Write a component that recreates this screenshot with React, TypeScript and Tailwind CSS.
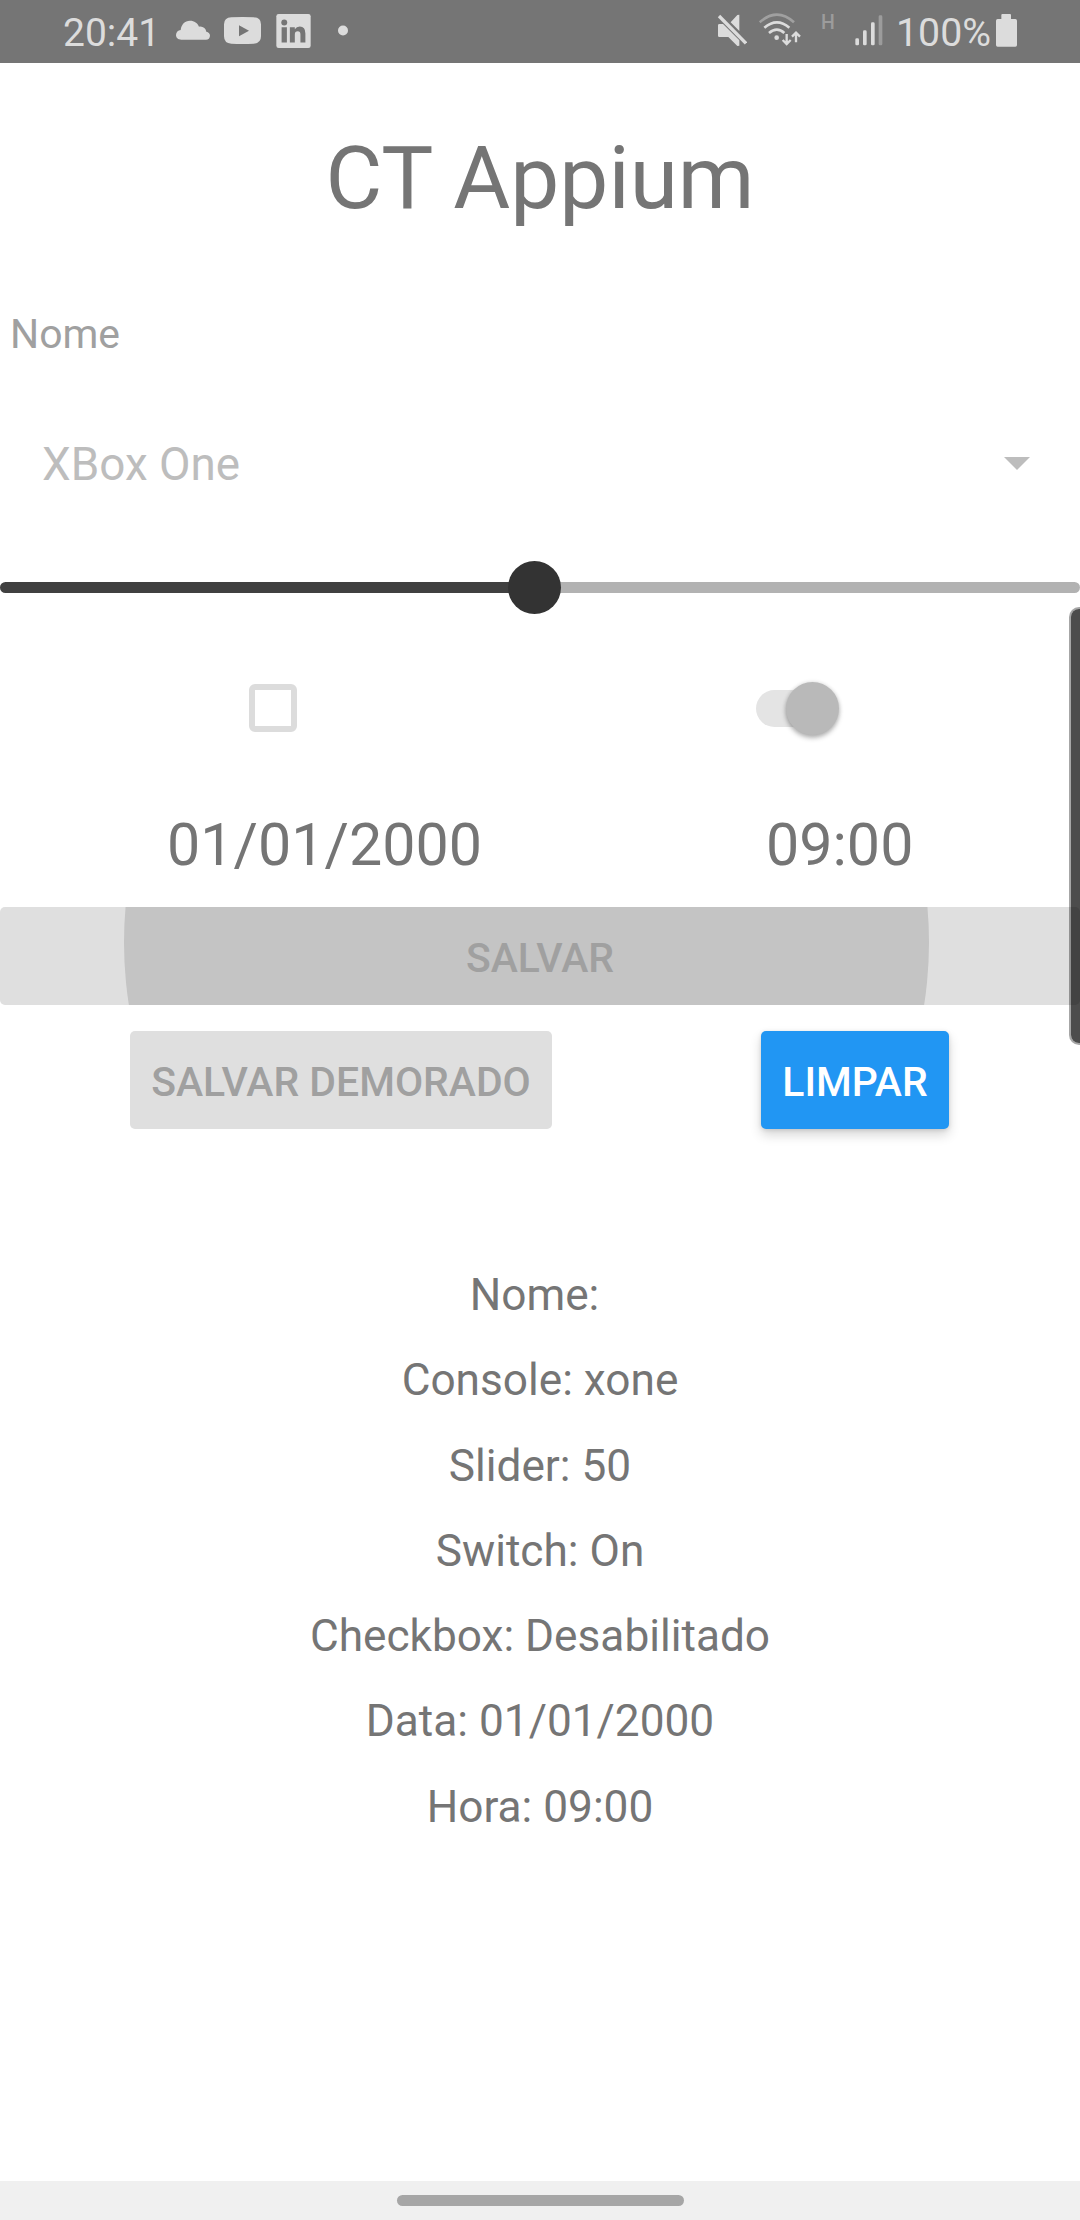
import React from "react";

function StatusBar() {
  return (
    <header className="flex h-[63px] shrink-0 items-center bg-[#757575] pl-[63px] text-[39px] leading-[63px] text-[#dcdcdc]">
      <span className="w-[113px] pt-[3px]">20:41</span>
      {/* cloud */}
      <svg className="h-5 w-[34px] shrink-0 -translate-y-[2px]" viewBox="528 58 102 60" fill="currentColor">
        <path d="M544 117C534 117 528 111 528 103C528 95 534 89 542 88C544 71 554 60 570 60C583 60 593 67 597 78C609 76 617 83 619 93C626 94 630 99 630 105C630 112 625 117 618 117Z" />
      </svg>
      {/* video */}
      <svg className="ml-[14px] h-[27px] w-[37px] shrink-0 -translate-y-[1px]" viewBox="672 51 111 81" fill="currentColor">
        <path fillRule="evenodd" d="M694 52Q728 50 761 52Q783 53 783 73V109Q783 130 761 131Q728 133 694 131Q672 130 672 109V73Q672 53 694 52ZM717 76V109L747 92.500Z" />
      </svg>
      {/* network badge */}
      <svg className="ml-[15px] h-[34px] w-[35px] shrink-0 -translate-y-[1px]" viewBox="828 41 104 103">
        <rect x="828" y="41" width="104" height="103" rx="7" fill="#dcdcdc" />
        <circle cx="852" cy="67" r="9" fill="#757575" />
        <path fill="#757575" d="M844 81H860V127H844ZM869 81H884V87Q889 79 899 79Q916 79 916 100V127H901V103Q901 93 893 93Q884 93 884 103V127H869Z" />
      </svg>
      <span className="ml-[27px] h-[10px] w-[10px] shrink-0 -translate-y-[1.5px] rounded-full bg-[#dcdcdc]" />

      {/* muted speaker */}
      <svg className="ml-[369px] h-[33px] w-[30px] shrink-0 -translate-y-[1px]" viewBox="110 42 90 99" fill="currentColor">
        <path d="M113 76Q113 72 117 72H128L177 121V137L171 138L144 111H117Q113 111 113 107ZM151 67L171 45L177 44V93Z" />
        <path d="M116 48L197 130" stroke="currentColor" strokeWidth="10" fill="none" />
      </svg>
      {/* wifi with traffic arrows */}
      <svg className="ml-[12px] h-[33px] w-[42px] shrink-0 -translate-y-[2px]" viewBox="236 38 126 99" fill="none" stroke="#dcdcdc" strokeWidth="8">
        <path d="M238 66Q290 20 341 66" stroke="#a0a0a0" />
        <path d="M252 82Q290 50 327 82" />
        <path d="M266 98Q290 78 312 98" />
        <circle cx="289" cy="112" r="7" fill="#dcdcdc" stroke="none" />
        <path d="M319 101V131M307 119L319 131L331 119M347 126V97M335 109L347 97L359 109" strokeWidth="7" />
      </svg>
      <span className="ml-[20px] w-[34px] -translate-y-[9px] text-[19.500px] font-medium text-[#9c9c9c]">H</span>
      {/* signal strength */}
      <svg className="h-[31px] w-[28px] shrink-0 -translate-y-[1px]" viewBox="524 45 84 93" fill="#dcdcdc">
        <rect x="525" y="115" width="11" height="21" rx="4" />
        <rect x="548" y="91" width="11" height="45" rx="4" />
        <rect x="572" y="67" width="11" height="69" rx="4" />
        <rect x="595" y="46" width="11" height="90" rx="4" fill="#9c9c9c" />
      </svg>
      <span className="ml-[13px] w-[100px] pt-[3px] text-[39.300px]">100%</span>
      {/* battery */}
      <svg className="h-[33px] w-[21px] shrink-0 -translate-y-[1px]" viewBox="948 42 63 99" fill="currentColor">
        <path d="M964 45Q964 42 967 42H990Q993 42 993 45V57H1006Q1011 57 1011 62V135Q1011 140 1006 140H953Q948 140 948 135V62Q948 57 953 57H964Z" />
      </svg>
    </header>
  );
}

function SelectRow() {
  return (
    <div className="flex h-[178px] shrink-0 items-center pr-[50px] pl-[42px]">
      <span className="pt-[2px] text-[45.800px] leading-[60px] text-[#bdbdbd]">XBox One</span>
      <svg className="mb-[2px] ml-auto h-[13px] w-[26px]" viewBox="0 0 26 13" fill="#bdbdbd">
        <path d="M0 0H26L13 13Z" />
      </svg>
    </div>
  );
}

function Slider() {
  return (
    <div className="flex h-[69px] shrink-0 items-center">
      <div className="h-[11px] flex-1 rounded-l-full bg-[#404040]" />
      <div className="z-10 -mx-[1px] h-[53px] w-[53px] rounded-full bg-[#333333]" />
      <div className="h-[11px] w-[520px] rounded-r-full bg-[#b2b2b2]" />
    </div>
  );
}

function Toggles() {
  return (
    <div className="flex h-[172px] shrink-0 items-center pl-[249px]">
      <div className="h-12 w-12 rounded-[6px] border-[6px] border-[#dcdcdc]" />
      <div className="ml-[459px] flex h-[37px] w-[72px] items-center rounded-full bg-[#e4e4e4]">
        <div className="-mr-[11px] ml-auto h-[53px] w-[53px] shrink-0 rounded-full bg-[#b9b9b9] shadow-[0_3px_5px_rgba(0,0,0,0.28),0_0_4px_rgba(0,0,0,0.12)]" />
      </div>
    </div>
  );
}

const summary = [
  "Nome: ",
  "Console: xone",
  "Slider: 50",
  "Switch: On",
  "Checkbox: Desabilitado",
  "Data: 01/01/2000",
  "Hora: 09:00",
];

export default function App() {
  return (
    <div className="relative flex h-[2220px] w-[1080px] flex-col overflow-hidden bg-white font-[Roboto,sans-serif] text-[#757575]">
      <StatusBar />
      <h1 className="h-[231px] shrink-0 text-center text-[87.400px] leading-[231px]">CT Appium</h1>
      <div className="flex h-[81px] shrink-0 items-center pl-[10px] text-[40.900px] leading-[81px] text-[#a0a0a0]">Nome</div>
      <SelectRow />
      <Slider />
      <Toggles />
      <div className="flex h-[113px] shrink-0 pl-[167px] text-[59.200px] leading-[102px]">
        <span className="w-[599px]">01/01/2000</span>
        <span>09:00</span>
      </div>

      <button className="relative h-[98px] shrink-0 overflow-hidden rounded-[5px] bg-[#dfdfdf] pt-1 text-[40.900px] leading-[94px] font-medium text-[#a0a0a0]">
        {/* touch ripple */}
        <span className="absolute -top-[367px] left-[124px] h-[805px] w-[805px] rounded-full bg-[#c4c4c4]" />
        <span className="relative">SALVAR</span>
      </button>
      <div className="mt-[26px] flex shrink-0 pl-[130px] text-[40.900px] leading-[94px] font-medium">
        <button className="h-[98px] w-[422px] rounded-[5px] bg-[#dfdfdf] pt-1 text-[#a0a0a0]">SALVAR DEMORADO</button>
        <button className="ml-[209px] h-[98px] w-[188px] rounded-[5px] bg-[#2196f3] pt-1 text-white shadow-[0_6px_12px_rgba(0,0,0,0.16),0_1px_4px_rgba(0,0,0,0.12)]">
          LIMPAR
        </button>
      </div>

      <div className="mt-[124px] flex flex-col text-center text-[44.200px] leading-[85.300px] whitespace-pre">
        {summary.map((line) => (
          <div key={line}>{line}</div>
        ))}
      </div>

      <footer className="mt-auto flex h-[39px] shrink-0 justify-center bg-[#f0f0f0] pt-[14px]">
        <div className="h-[11px] w-[287px] rounded-full bg-[#a6a6a6]" />
      </footer>

      {/* edge panel handle */}
      <div className="absolute top-[607px] right-0 h-[438px] w-[11px] rounded-l-[10px] border-y-2 border-l-2 border-black/35 bg-black/70 bg-clip-padding" />
    </div>
  );
}
